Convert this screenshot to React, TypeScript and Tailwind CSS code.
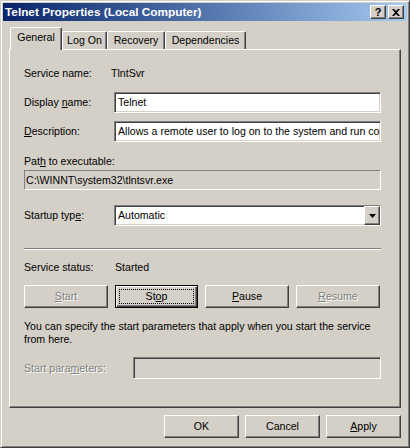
const raised =
  "border border-t-white border-l-white border-r-[#404040] border-b-[#404040] shadow-[inset_-1px_-1px_0_#808080]";
const sunken =
  "border border-t-[#808080] border-l-[#808080] border-r-white border-b-white shadow-[inset_1px_1px_0_#404040,inset_-1px_-1px_0_#d4d0c8]";
const disabledText = "text-[#808080] [text-shadow:1px_1px_0_#fff]";

function U({ children }: { children: React.ReactNode }) {
  return <span className="underline underline-offset-[1px]">{children}</span>;
}

function Button({
  children,
  width,
  disabled,
  focused,
}: {
  children: React.ReactNode;
  width: string;
  disabled?: boolean;
  focused?: boolean;
}) {
  const frame = focused
    ? "border border-black shadow-[inset_1px_1px_0_#fff,inset_-1px_-1px_0_#404040,inset_-2px_-2px_0_#808080]"
    : raised;
  return (
    <div
      className={`relative flex h-[23px] items-center justify-center bg-[#d4d0c8] ${width} ${frame} ${
        disabled ? disabledText : "text-black"
      }`}
    >
      {focused && (
        <span className="absolute inset-[3px] border border-dotted border-black" />
      )}
      <span className="relative">{children}</span>
    </div>
  );
}

function Tab({
  label,
  width,
  active,
}: {
  label: string;
  width: string;
  active?: boolean;
}) {
  return (
    <div
      className={`flex justify-center border-l border-t border-r border-l-white border-t-white border-r-[#404040] shadow-[inset_-1px_0_0_#808080] rounded-t-[2px] bg-[#d4d0c8] ${width} ${
        active ? "relative z-10 -mb-px h-[23px] pt-[3px]" : "h-[18px] pt-[2px]"
      }`}
    >
      {label}
    </div>
  );
}

export default function App() {
  return (
    <div
      className="flex h-[448px] w-[410px] flex-col border border-t-[#d4d0c8] border-l-[#d4d0c8] border-r-[#404040] border-b-[#404040] bg-[#d4d0c8] p-[2px] text-[10.6px] leading-[13px] text-black shadow-[inset_1px_1px_0_#fff,inset_-1px_-1px_0_#808080]"
      style={{ fontFamily: '"Liberation Sans", Arial, sans-serif' }}
    >
      {/* title bar */}
      <div className="flex h-[18px] items-center bg-gradient-to-r from-[#0a246a] to-[#a6caf0] pl-[2px] pr-[3px]">
        <span className="flex-1 text-[11.8px] font-bold text-white">
          Telnet Properties (Local Computer)
        </span>
        <div className={`flex h-[14px] w-[16px] items-center justify-center bg-[#d4d0c8] text-[11px] font-bold leading-none ${raised}`}>
          ?
        </div>
        <div className={`ml-[2px] flex h-[14px] w-[16px] items-center justify-center bg-[#d4d0c8] ${raised}`}>
          <svg width="8" height="7" viewBox="0 0 8 7">
            <path d="M0 0h2l2 2 2-2h2L5 3.5 8 7H6L4 5 2 7H0l3-3.5z" fill="#000" />
          </svg>
        </div>
      </div>

      {/* tabs */}
      <div className="mx-[6px] mt-[6px] flex items-end pl-[1px]">
        <Tab label="General" width="w-[52px]" active />
        <Tab label="Log On" width="w-[45px]" />
        <Tab label="Recovery" width="w-[58px]" />
        <Tab label="Dependencies" width="w-[81px]" />
      </div>

      {/* panel */}
      <div className="mx-[6px] flex h-[359px] flex-col border border-t-white border-l-white border-r-[#404040] border-b-[#404040] pl-[14px] pr-[19px] shadow-[inset_-1px_-1px_0_#808080]">
        <div className="mt-[13px] flex h-[21px] items-center">
          <span className="w-[87px]">Service name:</span>
          <span>TlntSvr</span>
        </div>

        <div className="mt-[8px] flex h-[21px] items-center">
          <span className="w-[90px]">
            Display <U>n</U>ame:
          </span>
          <div className={`flex h-full flex-1 items-center bg-white pl-[3px] ${sunken}`}>Telnet</div>
        </div>

        <div className="mt-[8px] flex h-[21px] items-center">
          <span className="w-[90px]">
            <U>D</U>escription:
          </span>
          <div className={`flex h-full min-w-0 flex-1 items-center overflow-hidden whitespace-nowrap bg-white pl-[3px] ${sunken}`}>
            Allows a remote user to log on to the system and run console programs using the command line.
          </div>
        </div>

        <div className="mt-[13px] h-[13px]">
          Pat<U>h</U> to executable:
        </div>
        <div className={`mt-[2px] flex h-[20px] items-center pl-[1px] ${sunken} shadow-none border-t-[#808080] border-l-[#808080]`}>
          C:\WINNT\system32\tlntsvr.exe
        </div>

        <div className="mt-[15px] flex h-[21px] items-center">
          <span className="w-[90px]">
            Startup typ<U>e</U>:
          </span>
          <div className={`flex h-full flex-1 items-center bg-white pl-[3px] ${sunken}`}>
            <span className="flex-1">Automatic</span>
            <div className={`flex h-full w-[16px] items-center justify-center bg-[#d4d0c8] ${raised}`}>
              <svg width="7" height="4" viewBox="0 0 7 4">
                <path d="M0 0h7L3.5 4z" fill="#000" />
              </svg>
            </div>
          </div>
        </div>

        <div className="mt-[22px] h-[2px] border-t border-b border-t-[#808080] border-b-white" />

        <div className="mt-[11px] flex h-[13px] items-center">
          <span className="w-[91px]">Service status:</span>
          <span>Started</span>
        </div>

        <div className="mt-[11px] flex gap-[7px]">
          <Button width="w-[84px]" disabled>
            <U>S</U>tart
          </Button>
          <Button width="w-[83px]" focused>
            St<U>o</U>p
          </Button>
          <Button width="w-[84px]">
            <U>P</U>ause
          </Button>
          <Button width="w-[84px]" disabled>
            <U>R</U>esume
          </Button>
        </div>

        <div className="mt-[12px]">
          You can specify the start parameters that apply when you start the service
          <br />
          from here.
        </div>

        <div className="mt-[11px] flex h-[22px] items-center">
          <span className={`w-[109px] ${disabledText}`}>
            Start para<U>m</U>eters:
          </span>
          <div className={`h-full flex-1 ${sunken}`} />
        </div>
      </div>

      {/* dialog buttons */}
      <div className="mt-[7px] flex justify-end gap-[6px] pr-[6px]">
        <Button width="w-[75px]">OK</Button>
        <Button width="w-[75px]">Cancel</Button>
        <Button width="w-[75px]">
          <U>A</U>pply
        </Button>
      </div>
    </div>
  );
}
